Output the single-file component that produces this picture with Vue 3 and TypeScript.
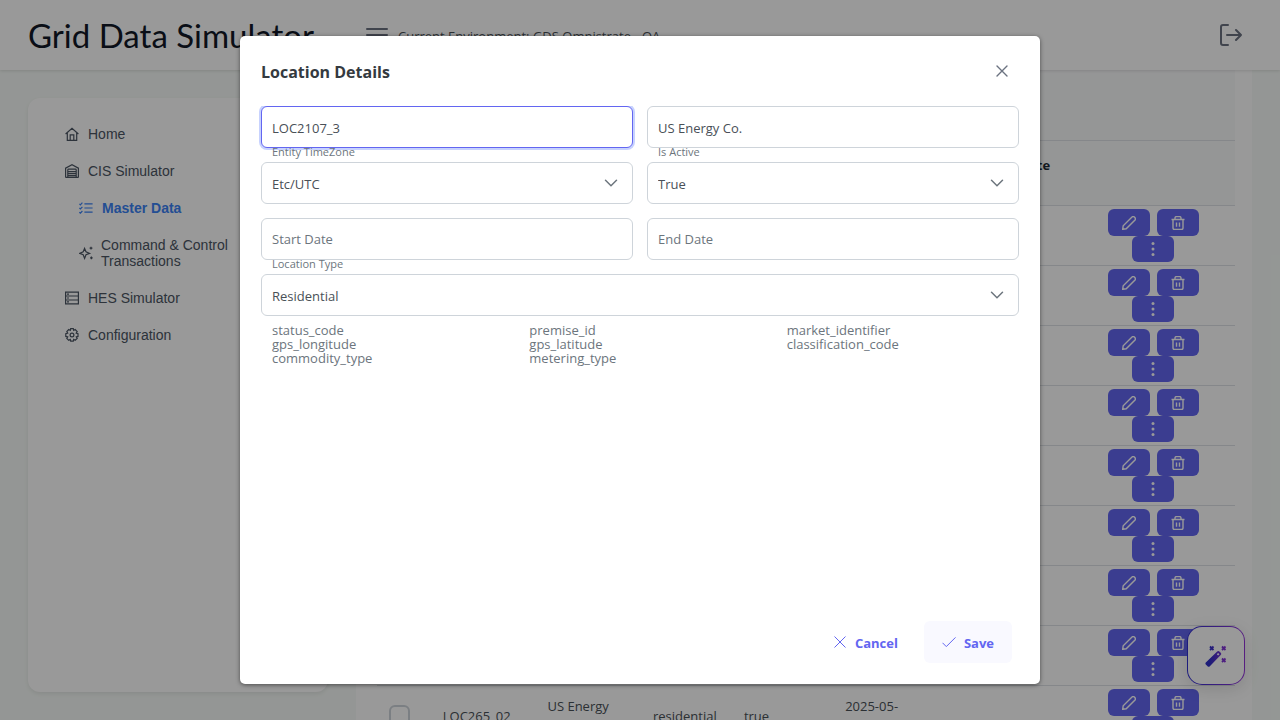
<script setup lang="ts">
import { ref } from 'vue'

interface Row {
  code?: string
  company?: string
  type?: string
  active?: string
  start?: string
}

const name = ref('LOC2107_3')
const company = ref('US Energy Co.')
const zone = ref('Etc/UTC')
const active = ref('True')
const startDate = ref('')
const endDate = ref('')
const kind = ref('Residential')

const attributes = [
  'status_code', 'premise_id', 'market_identifier',
  'gps_longitude', 'gps_latitude', 'classification_code',
  'commodity_type', 'metering_type',
]

const rows: Row[] = [
  {}, {}, {}, {}, {}, {}, {}, {},
  { code: 'LOC265_02', company: 'US Energy Co.', type: 'residential', active: 'true', start: '2025-05- 01' },
]
</script>

<template>
  <div class="app">
    <header class="topbar">
      <div class="brand">Grid Data Simulator</div>
      <button class="plain menu" aria-label="Menu">
        <svg width="22" height="20" viewBox="0 0 22 20"><path d="M1 2h20M1 8h20M1 14h20" /></svg>
      </button>
      <span class="env">Current Environment: GDS Omnistrate - QA</span>
      <button class="plain logout" aria-label="Log out">
        <svg width="22" height="22" viewBox="0 0 22 22"><path d="M8 1H3Q1 1 1 3v16q0 2 2 2h5M7 11h14M16 6l5 5-5 5" /></svg>
      </button>
    </header>

    <div class="body">
      <nav class="sidebar">
        <a href="#">
          <svg viewBox="0 0 14 14"><path d="M.6 7 7 1.2 13.4 7M2.3 5.8v7.5h9.4V5.8M5.2 13V7.8h3.6V13" /></svg>
          Home
        </a>
        <a href="#">
          <svg viewBox="0 0 14 14"><path d="M.6 13.5V4.2L7 .8l6.4 3.4v9.3M.6 13.4h2.2M11.2 13.4h2.2M2.8 13.4V6q0-.8.8-.8h6.8q.8 0 .8.8v7.4zM3 7.7h8M3 9.7h8M3 11.6h8" /></svg>
          CIS Simulator
        </a>
        <a href="#" class="sub current">
          <svg viewBox="0 0 14 14"><path d="M5.4 2.8h8.2M5.4 7h8.2M5.4 11.2h8.2M.4 2.8l1 1 2-2.2M.4 7l1 1 2-2.2M.4 11.2l1 1 2-2.2" /></svg>
          Master Data
        </a>
        <a href="#" class="sub double">
          <svg viewBox="0 0 14 14"><path d="M5.6 2.4 7 5.8l3.6 1.6L7 8.8l-1.4 3.6-1.4-3.6L.6 7.4l3.6-1.6zM12 .8v2.8M10.6 2.2h2.8M12.4 10.6v2.6M11.1 11.9h2.6" /></svg>
          <span>Command &amp; Control Transactions</span>
        </a>
        <a href="#">
          <svg viewBox="0 0 14 14"><path d="M.6 1.2h12.8v11.6H.6zM.6 5h12.8M.6 9h12.8M2 3.1h2M2 7h2M2 10.9h2" /></svg>
          HES Simulator
        </a>
        <a href="#">
          <svg viewBox="0 0 14 14"><path d="M5.700.7h2.600l.4 1.700 1.500-.9 2 2-1 1.600 1.800.5v2.800l-1.700.4.9 1.600-2 1.900-1.500-.9-.4 1.800H5.700l-.4-1.800-1.600.9-1.900-1.900.9-1.600L.8 8.400V5.600l1.900-.5-.9-1.600 1.900-2 1.600.9z" /><circle cx="7" cy="7" r="1.900" /></svg>
          Configuration
        </a>
      </nav>

      <main class="card">
        <div class="caption"></div>
        <table>
          <thead>
            <tr>
              <th class="c-check"></th><th class="c-code"></th><th class="c-company"></th>
              <th class="c-type"></th><th class="c-active"></th><th class="c-start"></th>
              <th class="c-end">End Date</th><th class="c-actions"></th>
            </tr>
          </thead>
          <tbody>
            <tr v-for="(row, i) in rows" :key="i">
              <td><input v-if="row.code" type="checkbox" :aria-label="row.code" /></td>
              <td>{{ row.code }}</td>
              <td class="c-company">{{ row.company }}</td>
              <td>{{ row.type }}</td>
              <td>{{ row.active }}</td>
              <td class="c-start">{{ row.start }}</td>
              <td></td>
              <td>
                <div class="actions">
                  <div class="pair">
                    <button aria-label="Edit"><svg viewBox="0 0 14 14"><path d="M.7 13.300 1.200 9.800 10 1q1.200-1 2.400.1 1.700 1.500.6 2.900L4.200 12.800z" /></svg></button>
                    <button aria-label="Delete"><svg viewBox="0 0 14 14"><path d="M.5 3.500h13M2 3.700v8.300q0 1.500 1.500 1.500h7q1.500 0 1.500-1.500V3.700M4 3.300V2Q4 .6 5.400.6h3.200Q10 .6 10 2v1.300M5.500 6.500v4.300M8.500 6.500v4.300" /></svg></button>
                  </div>
                  <button aria-label="More"><svg viewBox="0 0 14 14" class="dots"><circle cx="7" cy="1.500" r="1.500" /><circle cx="7" cy="7" r="1.500" /><circle cx="7" cy="12.500" r="1.500" /></svg></button>
                </div>
              </td>
            </tr>
          </tbody>
        </table>
      </main>
    </div>

    <button class="wand" aria-label="Assistant">
      <svg width="22" height="22" viewBox="0 0 22 22">
        <defs>
          <linearGradient id="wandInk" gradientUnits="userSpaceOnUse" x1="0" y1="0" x2="22" y2="0">
            <stop offset="0.2" stop-color="#2f2fc8" /><stop offset="1" stop-color="#9333d8" />
          </linearGradient>
        </defs>
        <path d="M.8 17.600 12.200 6.500q1.100-1 2.200 0l1.300 1.300q1 1.100 0 2.200L4.600 21.400q-.9.800-1.800 0L.8 19.400q-.8-.9 0-1.800zM11.800 9.200l1.300 1.300 1.300-1.300-1.300-1.300z" fill="url(#wandInk)" fill-rule="evenodd" />
        <path d="m5 1.500 3.500 3.500m0-3.500L5 5M17 1.500l3.500 3.500m0-3.500L17 5M17 13.500l3.500 3.500m0-3.500L17 17" stroke="url(#wandInk)" stroke-width="1.800" fill="none" />
      </svg>
    </button>

    <div class="mask">
      <section class="dialog" role="dialog" aria-modal="true" aria-labelledby="dialogTitle">
        <div class="head">
          <h2 id="dialogTitle">Location Details</h2>
          <button class="plain close" aria-label="Close">
            <svg width="12" height="12" viewBox="0 0 12 12"><path d="m1 1 10 10M11 1 1 11" /></svg>
          </button>
        </div>
        <div class="content">
          <form class="fields" @submit.prevent>
            <div class="field"><input v-model="name" class="focused" type="text" aria-label="Location name" /></div>
            <div class="field"><input v-model="company" type="text" aria-label="Company" /></div>
            <div class="field">
              <label for="zone">Entity TimeZone</label>
              <select id="zone" v-model="zone"><option>Etc/UTC</option></select>
              <svg class="chevron" width="14" height="14" viewBox="0 0 14 14"><path d="m1.500 4.200 5.500 5.500 5.500-5.500" /></svg>
            </div>
            <div class="field">
              <label for="active">Is Active</label>
              <select id="active" v-model="active"><option>True</option></select>
              <svg class="chevron" width="14" height="14" viewBox="0 0 14 14"><path d="m1.500 4.200 5.500 5.500 5.500-5.500" /></svg>
            </div>
            <div class="field"><input v-model="startDate" type="text" placeholder="Start Date" aria-label="Start Date" /></div>
            <div class="field"><input v-model="endDate" type="text" placeholder="End Date" aria-label="End Date" /></div>
            <div class="field wide">
              <label for="kind">Location Type</label>
              <select id="kind" v-model="kind"><option>Residential</option></select>
              <svg class="chevron" width="14" height="14" viewBox="0 0 14 14"><path d="m1.500 4.200 5.500 5.500 5.500-5.500" /></svg>
            </div>
          </form>
          <div class="attributes"><span v-for="a in attributes" :key="a">{{ a }}</span></div>
        </div>
        <div class="foot">
          <button>
            <svg width="14" height="14" viewBox="0 0 14 14"><path d="m1.500 1.500 11 11M12.500 1.500l-11 11" /></svg>
            <span>Cancel</span>
          </button>
          <button class="save">
            <svg width="14" height="14" viewBox="0 0 14 14"><path d="m.5 7.800 3.800 3.800L13.500 2.400" /></svg>
            <span>Save</span>
          </button>
        </div>
      </section>
    </div>
  </div>
</template>

<style>
body {
  background: #f7fbf8;
}
</style>

<style scoped>
* {
  box-sizing: border-box;
}
.app {
  position: relative;
  height: 100vh;
  overflow: hidden;
  background: #f7fbf8;
  font-family: "Segoe UI", "Open Sans", "Noto Sans", sans-serif;
  font-size: 13px;
  color: #495057;
}
button {
  font: inherit;
  cursor: pointer;
}
svg {
  flex: none;
  fill: none;
  stroke: currentColor;
}
.plain {
  display: flex;
  padding: 0;
  border: 0;
  background: none;
  color: #6b7280;
}
.plain svg {
  stroke-width: 2;
  stroke-linecap: round;
  stroke-linejoin: round;
}
.topbar {
  position: relative;
  z-index: 1;
  display: flex;
  align-items: center;
  height: 70px;
  padding: 0 38px 0 28px;
  background: #fff;
  box-shadow: 0 1px 3px rgba(0, 0, 0, 0.12);
}
.brand {
  width: 338px;
  font-family: "Gill Sans", "Gill Sans MT", Lato, sans-serif;
  font-size: 33px;
  color: #111827;
  white-space: nowrap;
}
.menu {
  padding-top: 4px;
}
.env {
  margin-left: 10px;
  padding-top: 2px;
}
.logout {
  margin-left: auto;
}
.body {
  display: flex;
  align-items: flex-start;
  gap: 28px;
  padding: 0 28px;
}
.sidebar {
  flex: none;
  display: flex;
  flex-direction: column;
  width: 300px;
  height: calc(100vh - 126px);
  margin-top: 28px;
  padding: 17px 37px;
  border-radius: 12px;
  background: #fff;
  box-shadow: 0 2px 4px rgba(0, 0, 0, 0.08);
  font-family: "Liberation Sans", Arial, sans-serif;
  font-size: 14px;
  line-height: 16px;
}
.sidebar a {
  display: flex;
  align-items: center;
  gap: 9px;
  height: 37px;
  color: #4b5563;
  text-decoration: none;
}
.sidebar svg {
  width: 14px;
  height: 14px;
  stroke-width: 1.2;
}
.sidebar .sub {
  padding-left: 14px;
}
.sidebar .current {
  color: #3b82f6;
  font-weight: 700;
}
.sidebar .double {
  height: 53px;
  width: 170px;
  gap: 8px;
}
.card {
  flex: 1;
  height: calc(100vh - 70px);
  overflow: hidden;
  padding: 0 17px 0 21px;
  background: #fff;
}
.caption {
  height: 71px;
  border-bottom: 1px solid #dee2e6;
  background: #f9fafb;
}
table {
  width: 100%;
  table-layout: fixed;
  border-collapse: separate;
  border-spacing: 0;
}
th {
  height: 65px;
  padding: 0 10px 16px;
  border-bottom: 1px solid #dee2e6;
  background: #f9fafb;
  color: #212a35;
  text-align: left;
}
td {
  height: 60px;
  padding: 0 10px;
  border-bottom: 1px solid #dee2e6;
  line-height: 20px;
}
.c-check { width: 6.5%; }
.c-code { width: 12.2%; }
.c-company { width: 12.3%; }
td.c-company { padding-right: 26px; }
.c-type { width: 10.6%; }
.c-active { width: 11.8%; }
.c-start { width: 17.1%; }
td.c-start { padding-right: 78px; }
.c-end { width: 10.5%; }
td input {
  display: block;
  width: 21px;
  height: 21px;
  margin: 0 0 0 2px;
  border: 2px solid #ced4da;
  border-radius: 6px;
  background: #fff;
  appearance: none;
}
.actions {
  display: flex;
  flex-direction: column;
  align-items: center;
}
.pair {
  display: flex;
  gap: 7px;
}
.actions button {
  display: flex;
  align-items: center;
  justify-content: center;
  width: 42px;
  height: 27px;
  border: 0;
  border-radius: 6px;
  background: #6366f1;
  color: #fff;
}
.actions > button {
  height: 26px;
}
.actions svg {
  width: 14px;
  height: 14px;
  stroke-width: 1.4;
}
.actions .dots {
  fill: currentColor;
  stroke: none;
}
.wand {
  position: absolute;
  right: 35px;
  bottom: 35px;
  display: flex;
  align-items: center;
  justify-content: center;
  width: 58px;
  height: 59px;
  border: 1px solid transparent;
  border-radius: 15px;
  background: linear-gradient(#fff, #fff) padding-box, linear-gradient(90deg, #3030d0, #9333d8) border-box;
  box-shadow: 0 4px 16px rgba(0, 0, 0, 0.12);
}
.wand svg {
  stroke: none;
}
.mask {
  position: absolute;
  inset: 0;
  z-index: 2;
  display: flex;
  align-items: center;
  justify-content: center;
  background: rgba(0, 0, 0, 0.4);
}
.dialog {
  display: flex;
  flex-direction: column;
  width: 800px;
  max-width: 100%;
  height: 90vh;
  border-radius: 5px;
  background: #fff;
  box-shadow: 0 1px 4px rgba(0, 0, 0, 0.5);
}
.head {
  display: flex;
  align-items: center;
  justify-content: space-between;
  height: 70px;
  padding: 0 32px 0 21px;
}
h2 {
  margin: 0;
  padding-top: 2px;
  font-size: 16px;
  color: #343a40;
}
.close svg {
  stroke-width: 1.4;
}
.content {
  flex: 1;
  overflow: auto;
  padding: 0 21px;
}
.fields {
  display: grid;
  grid-template-columns: 1fr 1fr;
  gap: 14px;
}
.field {
  position: relative;
}
.wide {
  grid-column: 1 / -1;
}
.field input,
.field select {
  position: relative;
  z-index: 1;
  display: block;
  width: 100%;
  height: 42px;
  padding: 2px 10px 0;
  border: 1px solid #ced4da;
  border-radius: 6px;
  outline: 0;
  background: #fff;
  color: #495057;
  font: inherit;
  appearance: none;
}
.field input:placeholder-shown {
  padding-top: 0;
}
.field input::placeholder {
  color: #6c757d;
  opacity: 1;
}
.field .focused {
  border-color: #6366f1;
  box-shadow: 0 0 0 2px #c7d2fe;
}
.field label {
  position: absolute;
  top: -18px;
  left: 11px;
  z-index: 2;
  font-size: 11px;
  line-height: 16px;
  color: #6c757d;
}
.chevron {
  position: absolute;
  z-index: 2;
  top: 14px;
  right: 15px;
  color: #6c757d;
  stroke-width: 1.5;
  stroke-linecap: round;
  pointer-events: none;
}
.attributes {
  display: grid;
  grid-template-columns: repeat(3, 1fr);
  column-gap: 14px;
  padding: 7px 0 0 11px;
  margin-right: -11px;
  line-height: 14px;
  color: #6c757d;
}
.foot {
  display: flex;
  justify-content: flex-end;
  gap: 8px;
  padding: 0 28px 21px;
}
.foot button {
  display: flex;
  align-items: center;
  gap: 8px;
  height: 42px;
  padding: 0 18px;
  border: 0;
  border-radius: 6px;
  background: none;
  color: #6366f1;
  font-weight: 700;
}
.foot span {
  padding-top: 2px;
}
.foot .save {
  background: #f9f9ff;
}
</style>
